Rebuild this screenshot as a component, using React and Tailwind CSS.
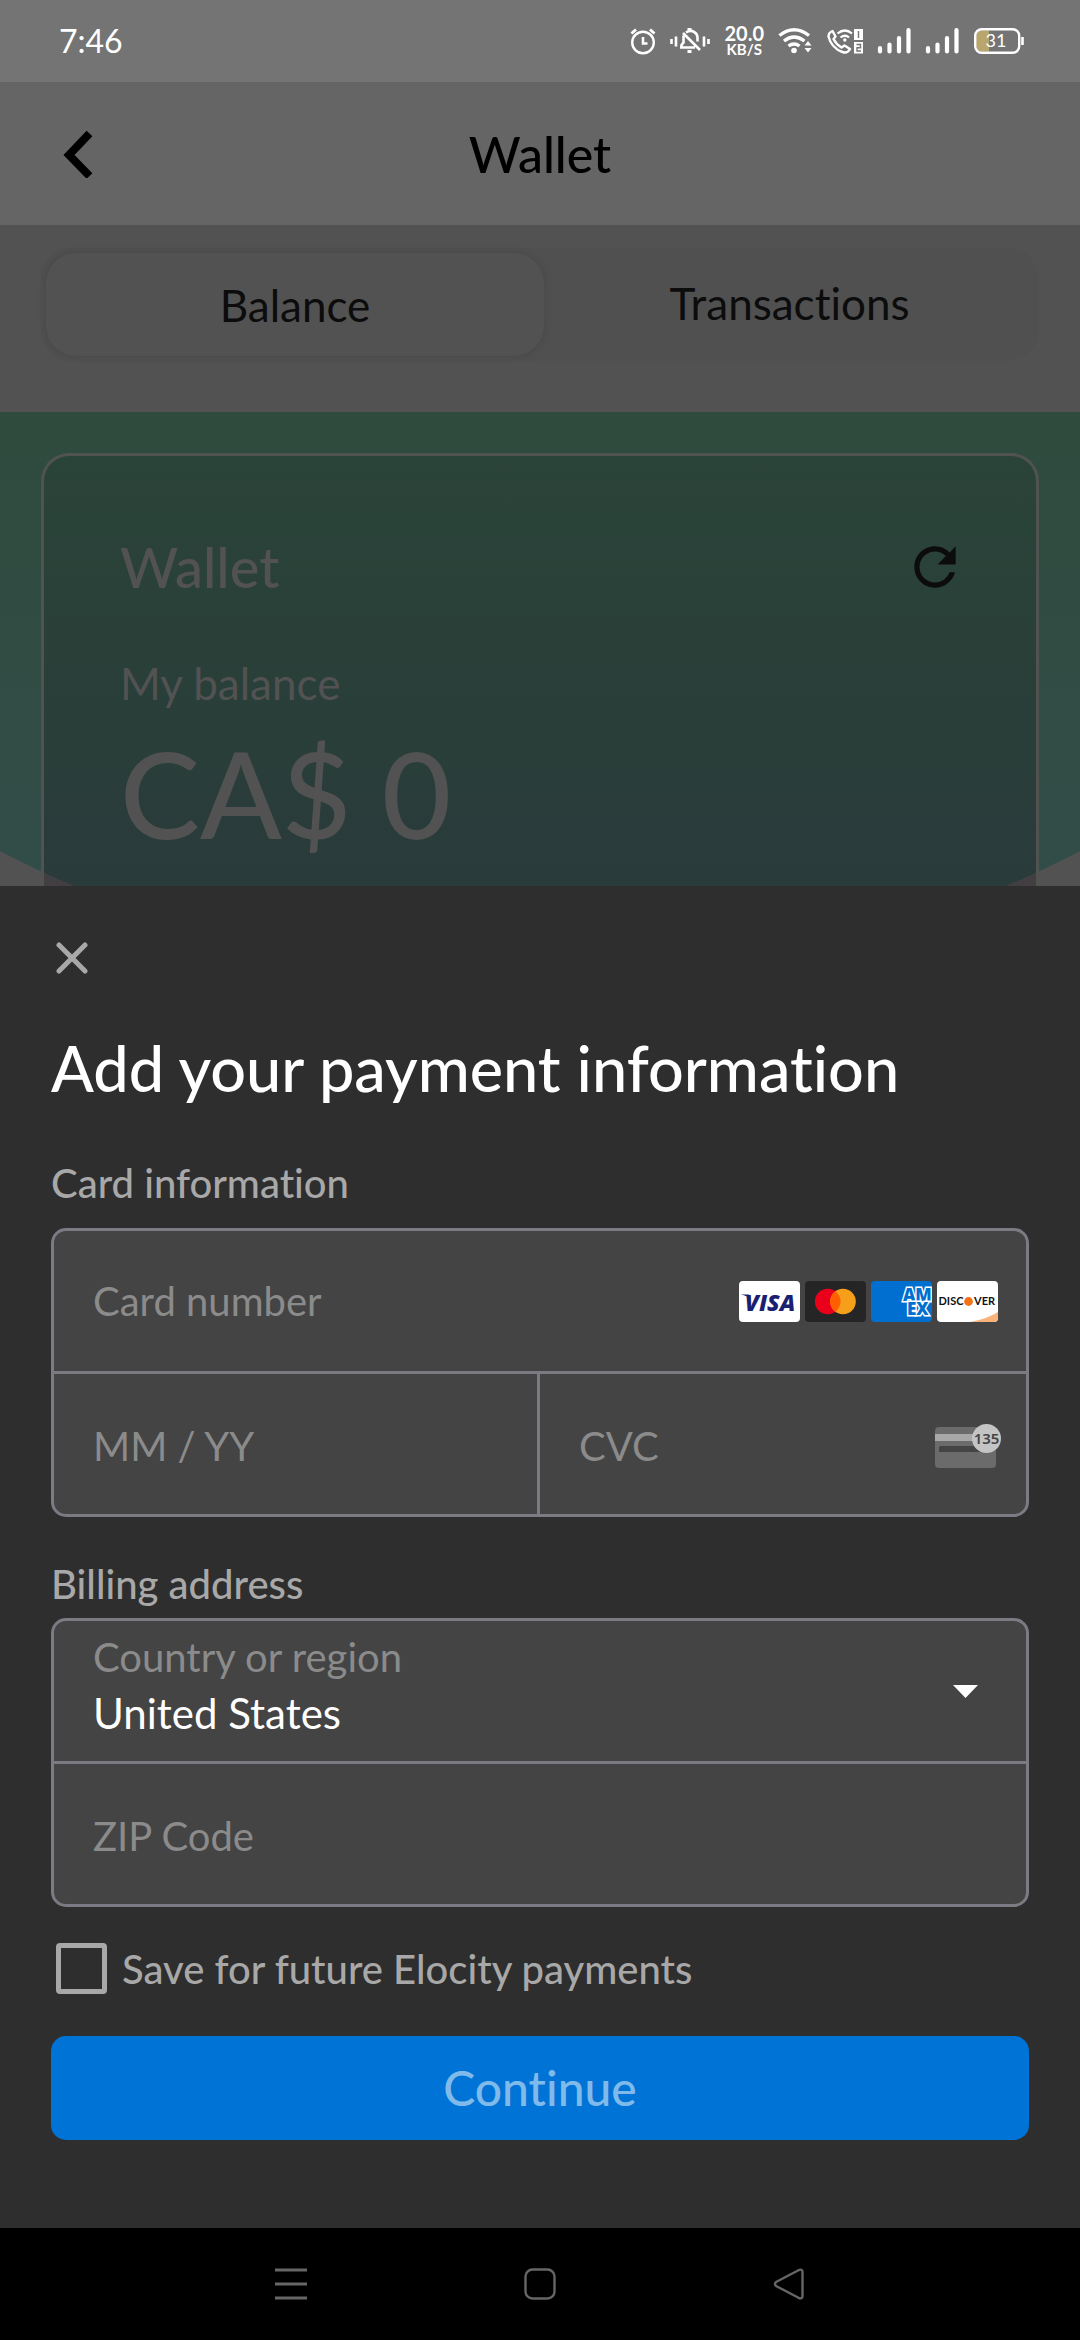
import { MdRefresh } from "react-icons/md";

function AlarmIcon() {
  return (
    <svg width="26" height="28" viewBox="0 0 26 28" fill="none" stroke="#fff" aria-hidden="true">
      <circle cx="13" cy="15.5" r="10.8" strokeWidth="2.4" />
      <path d="M13 10v6.5h4.5" strokeWidth="2.6" />
      <path d="M1.5 6.5 6 2.5M24.500 6.500 20 2.500" strokeWidth="3" />
    </svg>
  );
}

function SilentIcon() {
  return (
    <svg width="40" height="28" viewBox="0 0 40 28" fill="none" stroke="#fff" strokeWidth="2.600" aria-hidden="true">
      <path d="M1.500 12v5M6 9.500v10M34 9.500v10M38.500 12v5" />
      <path d="M10 20.500h15M11.500 20v-2l2-2.500v-7M16 5.500c6-4 11.500 .5 11.500 5v4M13 6 30 23" />
      <path d="M17.500 2.500h4M17.500 24.500h4" strokeWidth="3" />
    </svg>
  );
}

function WifiIcon() {
  return (
    <svg width="35" height="28" viewBox="0 0 35 28" fill="none" stroke="#fff" aria-hidden="true">
      <path d="M1.500 8.500Q16 -3 31 8.500M6 14Q16 6 26.500 14M10.500 19Q16 15 21.500 19" strokeWidth="3.400" />
      <circle cx="16" cy="23.500" r="2.800" fill="#fff" stroke="none" />
      <path d="M26.500 18.500 30 14l3.500 4.500zM26.500 21 30 25.500 33.500 21z" fill="#fff" stroke="none" />
    </svg>
  );
}

function CallIcon() {
  return (
    <svg width="36" height="28" viewBox="0 0 36 28" fill="none" stroke="#fff" aria-hidden="true">
      <path
        d="M5.500 4 8.500 9.500 6.500 12c2 4 4.500 6.500 8 8.500l3-2 5.500 3.500c-1.500 3-4.500 4-7.500 3C8 22.500 3 16 1.500 9.500 1.500 7 3 5 5.500 4z"
        strokeWidth="2.400"
        strokeLinejoin="round"
      />
      <path d="M10.500 6.500Q18 .5 25 6.500M13.500 10.500Q18 7 22 10.500" strokeWidth="2.200" />
      <circle cx="17.800" cy="13" r="1.700" fill="#fff" stroke="none" />
      <rect x="27" y="2" width="9" height="11" fill="#fff" stroke="none" />
      <rect x="27" y="15" width="9" height="11.500" fill="#fff" stroke="none" />
      <path d="M31.500 4v7M29.500 17.500h4v3.200h-3.500v3.300h4" stroke="#747474" strokeWidth="1.400" />
    </svg>
  );
}

function SignalIcon() {
  return (
    <svg width="34" height="28" viewBox="0 0 34 28" fill="none" stroke="#fff" strokeWidth="4.200" strokeLinecap="round" aria-hidden="true">
      <path d="M3 21v3.500M12.500 17.500v7M22 11v13.500M31.500 3v21.500" />
    </svg>
  );
}

function BatteryIcon() {
  return (
    <svg width="51" height="28" viewBox="0 0 51 28" aria-hidden="true">
      <path d="M16 3.500H9a6 6 0 0 0-6 6v9a6 6 0 0 0 6 6h7z" fill="#b9a66c" />
      <rect x="2.200" y="2.200" width="44" height="23.600" rx="6.500" fill="none" stroke="#fff" strokeWidth="2.400" />
      <path d="M49.500 10v8" stroke="#fff" strokeWidth="2.600" />
      <text x="23" y="20" textAnchor="middle" fontSize="18" fill="#fff">
        31
      </text>
    </svg>
  );
}

function StatusBar() {
  return (
    <div className="flex h-[82px] items-center justify-between bg-[#747474] pl-[59px] pr-14 text-white">
      <span className="text-[32px] leading-10">7:46</span>
      <div className="flex items-center gap-3.5">
        <AlarmIcon />
        <SilentIcon />
        <div className="flex flex-col items-center font-bold">
          <span className="text-xl leading-4">20.0</span>
          <span className="text-[15px] leading-4">KB/S</span>
        </div>
        <WifiIcon />
        <CallIcon />
        <SignalIcon />
        <SignalIcon />
        <BatteryIcon />
      </div>
    </div>
  );
}

function Header() {
  return (
    <header className="grid h-[143px] grid-cols-3 items-center bg-[#656565] text-black">
      <button type="button" aria-label="Back" className="ml-14 flex size-12 items-center justify-center justify-self-start">
        <svg width="48" height="48" viewBox="0 0 48 48" fill="none" stroke="#000" strokeWidth="8" aria-hidden="true">
          <path d="M33.500 3.500 13 25l20.500 21" />
        </svg>
      </button>
      <h1 className="text-center text-[50px] font-medium leading-[60px]">Wallet</h1>
    </header>
  );
}

function Tabs() {
  return (
    <div className="px-[41px] pb-[51px] pt-[23px]">
      <div role="tablist" className="grid h-[113px] grid-cols-2 rounded-[32px] bg-[#505050] text-[44px] text-[#0c0c0c]">
        <button
          type="button"
          role="tab"
          aria-selected="true"
          className="my-[5px] ml-[5px] -mr-1 rounded-[30px] bg-[#525252] shadow-[0_0_6px_#474747]"
        >
          Balance
        </button>
        <button type="button" role="tab" aria-selected="false" className="pb-1">
          Transactions
        </button>
      </div>
    </div>
  );
}

function BalanceCard() {
  return (
    <section className="relative overflow-hidden px-[41px] pt-[41px]">
      <div className="absolute inset-0 bg-linear-to-b from-[#2f4b3e] to-[#324d48] [clip-path:circle(1180px_at_50%_-610px)]" />
      <div className="relative rounded-t-[28px] border-[3px] border-b-0 border-[#505350] bg-linear-to-b from-black/10 to-[#100010]/24 px-[76px] pb-[33px] pt-[79px] text-[#525252]">
        <div className="-mr-[6px] flex items-center justify-between">
          <h2 className="text-[56px] font-medium leading-[64px]">Wallet</h2>
          <button type="button" aria-label="Refresh balance" className="text-[#0c0c0c]">
            <MdRefresh size={62} />
          </button>
        </div>
        <p className="mt-14 text-[44px] leading-[56px]">My balance</p>
        <p className="mt-[22px] text-[120px] font-medium leading-[120px]">CA$ 0</p>
      </div>
    </section>
  );
}

function CardBrands() {
  return (
    <div className="flex gap-[5px]">
      <svg width="61" height="41" viewBox="0 0 61 41" role="img" aria-label="Visa">
        <rect width="61" height="41" rx="4" fill="#fff" />
        <text x="31" y="29.500" textAnchor="middle" fontFamily="'Open Sans', sans-serif" fontWeight="800" fontStyle="italic" fontSize="23" fill="#1a1f71">
          VISA
        </text>
        <path d="M2 13.500h8l2 5Q8 14.500 2 13.500z" fill="#1a1f71" />
      </svg>
      <svg width="61" height="41" viewBox="0 0 61 41" role="img" aria-label="Mastercard">
        <rect width="61" height="41" rx="4" fill="#252525" />
        <circle cx="22.700" cy="20.500" r="12.800" fill="#eb001b" />
        <circle cx="38" cy="20.500" r="12.800" fill="#f79e1b" />
        <path d="M30.350 10.200a12.800 12.800 0 0 1 0 20.600 12.800 12.800 0 0 1 0-20.600z" fill="#ff5f00" />
      </svg>
      <svg width="61" height="41" viewBox="0 0 61 41" role="img" aria-label="American Express">
        <rect width="61" height="41" rx="4" fill="#006fcf" />
        <g fontFamily="'Open Sans', sans-serif" fontWeight="800" fontSize="17" fill="#006fcf" stroke="#fff" strokeWidth="2.800" paintOrder="stroke">
          <text x="32" y="20">AM</text>
          <text x="36" y="34">EX</text>
        </g>
      </svg>
      <svg width="61" height="41" viewBox="0 0 61 41" role="img" aria-label="Discover">
        <rect width="61" height="41" rx="4" fill="#fff" />
        <path d="M33 41Q50 38 61 31v6a4 4 0 0 1-4 4z" fill="#f9b27c" />
        <g fontFamily="Lato, sans-serif" fontWeight="700" fontSize="11" fill="#111">
          <text x="1.500" y="24">DISC</text>
          <text x="37" y="24">VER</text>
        </g>
        <circle cx="31.500" cy="20.500" r="4.400" fill="#f47216" />
      </svg>
    </div>
  );
}

function CvcIcon() {
  return (
    <svg width="67" height="45" viewBox="0 0 67 45" aria-hidden="true">
      <rect x="0" y="3" width="61" height="41" rx="4" fill="#6b6b6b" />
      <rect x="0" y="10" width="40" height="7" fill="#a8a8a8" />
      <rect x="4" y="22" width="52" height="6" rx="1.500" fill="#444" />
      <circle cx="51.500" cy="14.500" r="14.500" fill="#c4c4c4" />
      <text x="51.500" y="20" textAnchor="middle" fontFamily="'Noto Sans', sans-serif" fontWeight="600" fontSize="15" fill="#444">
        135
      </text>
    </svg>
  );
}

const inputClass =
  "h-[136px] w-full min-w-0 flex-1 bg-transparent pl-[39px] text-[40px] text-white outline-none placeholder:text-[#8b8b8b]";

const groupClass = "overflow-hidden rounded-[15px] border-[3px] border-[#7b7b83] bg-[#444444]";

function PaymentSheet() {
  return (
    <form className="flex-1 bg-[#2e2e2e] px-[51px] pb-[88px] pt-[51px]" onSubmit={(e) => e.preventDefault()}>
      <button type="button" aria-label="Close" className="flex size-[42px] items-center justify-center">
        <svg width="32" height="32" viewBox="0 0 32 32" stroke="#a8a8a8" strokeWidth="5" strokeLinecap="round" aria-hidden="true">
          <path d="M3 3l26 26M29 3 3 29" />
        </svg>
      </button>

      <h2 className="mt-[53px] text-[63px] font-medium leading-[72px] text-white">Add your payment information</h2>

      <h3 className="mt-[55px] text-[40px] font-medium leading-[48px] text-[#a8a8a8]">Card information</h3>
      <div className={`mt-[21px] ${groupClass}`}>
        <div className="flex items-center border-b-[3px] border-[#7b7b83] py-0.5 pr-[28px]">
          <input aria-label="Card number" placeholder="Card number" className={inputClass} />
          <CardBrands />
        </div>
        <div className="grid grid-cols-2">
          <div className="flex border-r-[3px] border-[#7b7b83] pt-1">
            <input aria-label="Expiration date" placeholder="MM / YY" className={inputClass} />
          </div>
          <div className="flex items-center pr-6 pt-1">
            <input aria-label="CVC" placeholder="CVC" className={inputClass} />
            <CvcIcon />
          </div>
        </div>
      </div>

      <h3 className="mt-[43px] text-[40px] font-medium leading-[48px] text-[#a8a8a8]">Billing address</h3>
      <div className={`mt-2.5 ${groupClass}`}>
        <div className="relative border-b-[3px] border-[#7b7b83] pb-5 pt-2">
          <label htmlFor="country" className="block pl-[39px] text-[40px] leading-[56px] text-[#8b8b8b]">
            Country or region
          </label>
          <select id="country" defaultValue="US" className="block h-14 w-full appearance-none pl-[39px] pr-24 text-[42px] leading-[56px] text-white outline-none">
            <option value="US">United States</option>
          </select>
          <svg className="pointer-events-none absolute right-12 top-16" width="25" height="13" viewBox="0 0 25 13" aria-hidden="true">
            <path d="M0 0h25L12.500 13z" fill="#fff" />
          </svg>
        </div>
        <div className="flex pt-1">
          <input aria-label="ZIP Code" placeholder="ZIP Code" className={inputClass} />
        </div>
      </div>

      <label className="mt-9 flex h-[51px] items-center gap-[15px] pl-[5px] text-[40px] font-medium leading-[48px] text-[#a8a8a8]">
        <input type="checkbox" className="size-[51px] shrink-0 appearance-none rounded-[4px] border-[5px] border-[#a8a8a8] checked:bg-[#0074d6]" />
        Save for future Elocity payments
      </label>

      <button type="submit" className="mt-[42px] block h-[104px] w-full rounded-[15px] bg-[#0074d6] text-5xl font-medium text-[#80baeb]">
        Continue
      </button>
    </form>
  );
}

function NavBar() {
  return (
    <nav className="grid h-28 grid-cols-3 items-center justify-items-center bg-black px-[166px]">
      <button type="button" aria-label="Recent apps">
        <svg width="32" height="32" viewBox="0 0 32 32" stroke="#666" strokeWidth="2.800" aria-hidden="true">
          <path d="M0 2h32M0 16h32M0 30h32" />
        </svg>
      </button>
      <button type="button" aria-label="Home">
        <svg width="32" height="32" viewBox="0 0 32 32" fill="none" stroke="#666" strokeWidth="2.400" aria-hidden="true">
          <rect x="1.500" y="1.500" width="29" height="29" rx="7" />
        </svg>
      </button>
      <button type="button" aria-label="Back to previous screen">
        <svg width="32" height="32" viewBox="0 0 32 32" fill="none" stroke="#666" strokeWidth="2.400" strokeLinejoin="round" aria-hidden="true">
          <path d="M25.500 2.200 3 14Q1 16 3 18l22.500 11.800Q29.500 31.500 29.500 28V4Q29.500.5 25.500 2.200z" />
        </svg>
      </button>
    </nav>
  );
}

export default function App() {
  return (
    <div className="flex min-h-screen flex-col bg-[#525252] font-[Lato,sans-serif] [font-variant-ligatures:none]">
      <StatusBar />
      <Header />
      <Tabs />
      <BalanceCard />
      <PaymentSheet />
      <NavBar />
    </div>
  );
}
